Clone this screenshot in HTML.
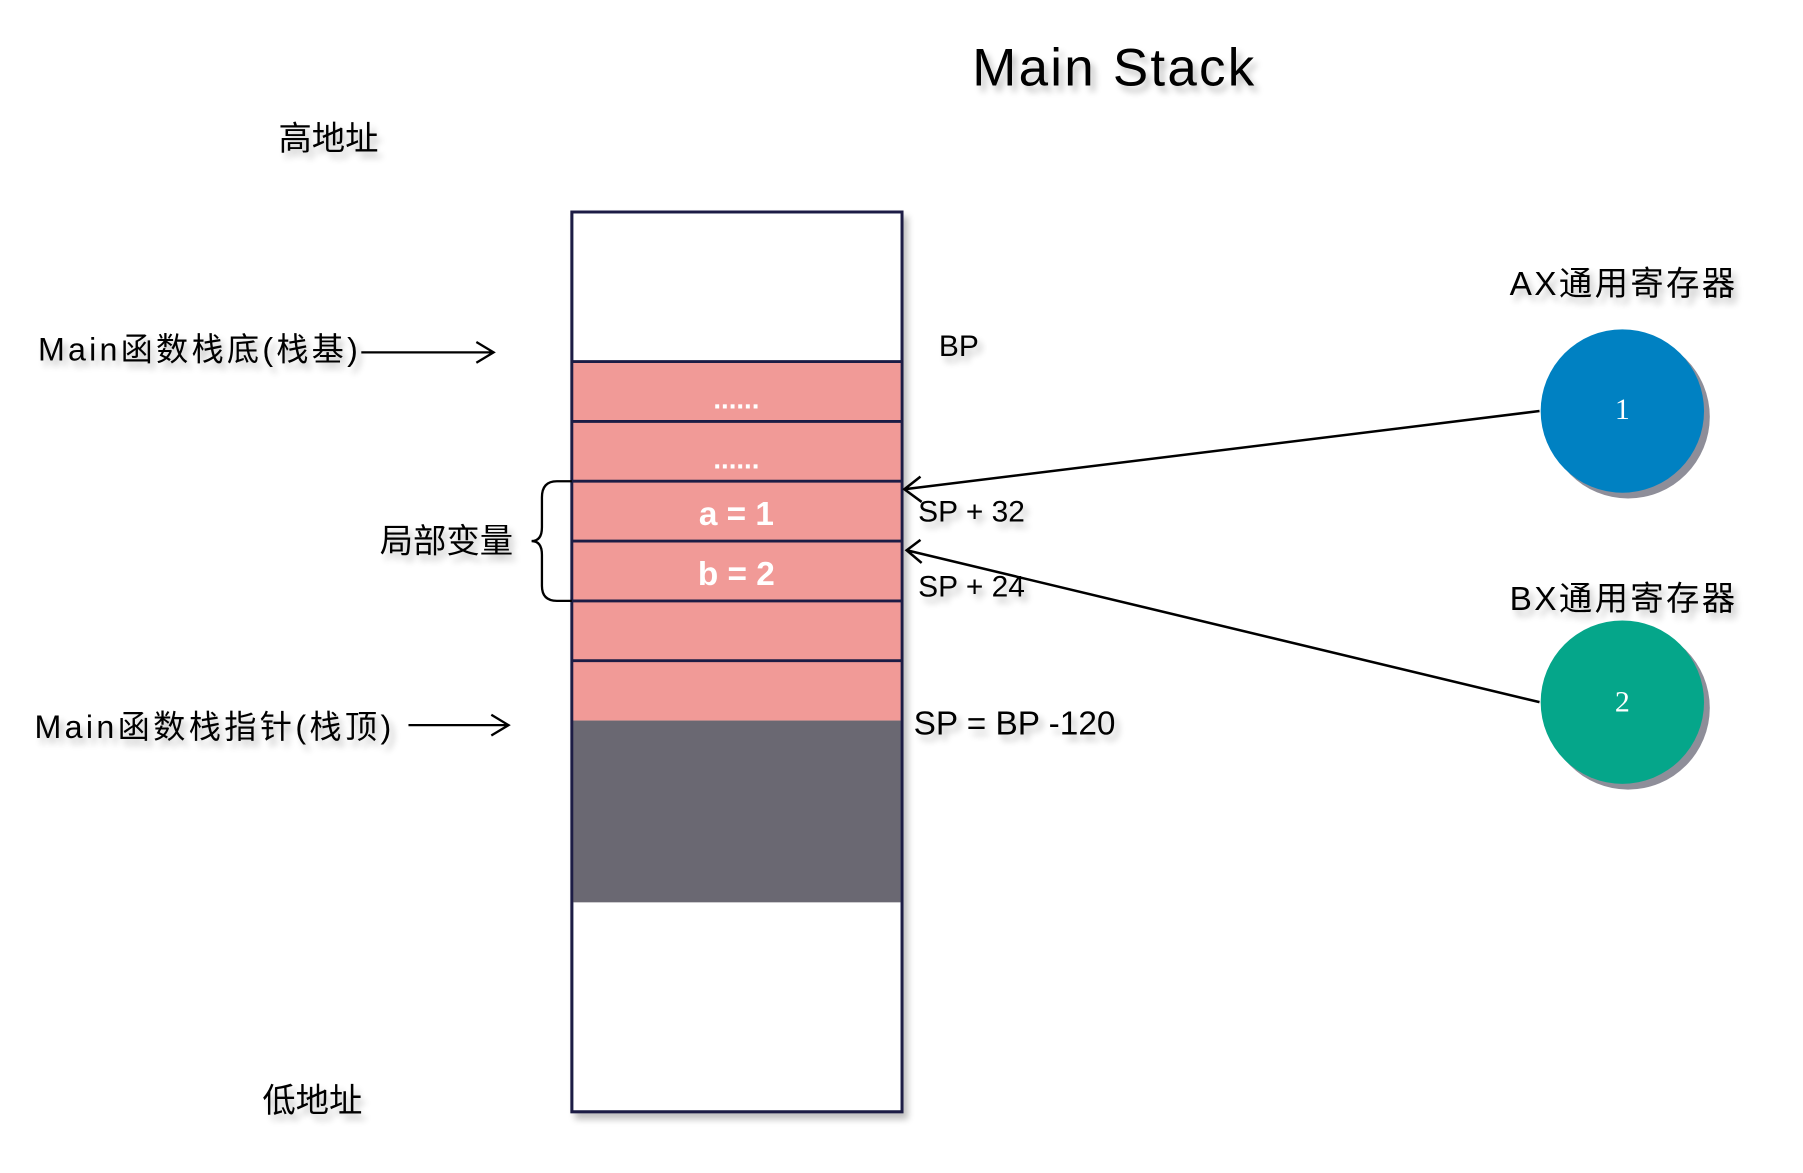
<!DOCTYPE html>
<html><head><meta charset="utf-8"><style>
html,body{margin:0;padding:0;background:#fff;}
svg{display:block;}
text{font-family:"Liberation Sans","Noto Sans CJK SC",sans-serif;fill:#000;}
</style></head><body>
<svg width="1803" height="1173" viewBox="0 0 1567 1019" xmlns="http://www.w3.org/2000/svg">
<defs>
<filter id="sh" x="-20%" y="-20%" width="140%" height="160%">
<feGaussianBlur in="SourceAlpha" stdDeviation="3"/>
<feOffset dx="4" dy="5"/>
<feComponentTransfer><feFuncA type="linear" slope="0.25"/></feComponentTransfer>
<feMerge><feMergeNode/><feMergeNode in="SourceGraphic"/></feMerge>
</filter>
</defs>
<text x="845" y="74" font-size="46" filter="url(#sh)" textLength="245">Main Stack</text>
<text x="242" y="130" font-size="29" filter="url(#sh)">高地址</text>
<text x="228" y="966" font-size="29" filter="url(#sh)">低地址</text>

<g filter="url(#sh)">
<rect x="497" y="184" width="287" height="782" fill="#fff" stroke="#1a1f45" stroke-width="2.5"/>
<rect x="497" y="314" width="287" height="312" fill="#f19a97"/>
<rect x="497" y="626" width="287" height="158" fill="#6b6872"/>
<path d="M497 184V966H784V184ZM497 314H784M497 366H784M497 418H784M497 470H784M497 522H784M497 574H784" fill="none" stroke="#1a1f45" stroke-width="2.5"/>
</g>
<text x="640" y="355" font-size="24" font-weight="bold" style="fill:#fff" text-anchor="middle">......</text>
<text x="640" y="407" font-size="24" font-weight="bold" style="fill:#fff" text-anchor="middle">......</text>
<text x="640" y="456" font-size="29" font-weight="bold" style="fill:#fff" text-anchor="middle">a = 1</text>
<text x="640" y="508" font-size="29" font-weight="bold" style="fill:#fff" text-anchor="middle">b = 2</text>

<text x="816" y="309" font-size="26" filter="url(#sh)">BP</text>
<text x="33" y="313" font-size="28" filter="url(#sh)" textLength="278">Main函数栈底(栈基)</text>
<path d="M314 306H428M414 297L429 306L414 315" fill="none" stroke="#000" stroke-width="2"/>
<text x="30" y="641" font-size="28" filter="url(#sh)" textLength="310">Main函数栈指针(栈顶)</text>
<path d="M355 630H441M427 621L442 630L427 639" fill="none" stroke="#000" stroke-width="2"/>
<text x="330" y="480" font-size="29" filter="url(#sh)">局部变量</text>
<path d="M497 418H484Q471 418 471 432V458Q471 470 462 470Q471 470 471 482V509Q471 522 484 522H497" fill="none" stroke="#000" stroke-width="2"/>

<text x="798" y="453" font-size="26" filter="url(#sh)">SP + 32</text>
<text x="798" y="518" font-size="26" filter="url(#sh)">SP + 24</text>
<text x="794" y="638" font-size="29" filter="url(#sh)">SP = BP -120</text>

<path d="M1338 357L786 425M800 414L786 425L801 436" fill="none" stroke="#000" stroke-width="2.2"/>
<path d="M1338 610L788 478M800 469L788 478L801 489" fill="none" stroke="#000" stroke-width="2.2"/>

<text x="1312" y="256" font-size="29" filter="url(#sh)" textLength="196">AX通用寄存器</text>
<text x="1312" y="530" font-size="29" filter="url(#sh)" textLength="196">BX通用寄存器</text>
<ellipse cx="1415" cy="362" rx="71" ry="71" fill="#8e8e99"/>
<ellipse cx="1410" cy="357" rx="71" ry="71" fill="#0081c2"/>
<ellipse cx="1415" cy="615" rx="71" ry="71" fill="#8e8e99"/>
<ellipse cx="1410" cy="610" rx="71" ry="71" fill="#05a68a"/>
<text x="1410" y="364" font-size="26" text-anchor="middle" style="fill:#fff;font-family:'Liberation Serif',serif">1</text>
<text x="1410" y="618" font-size="26" text-anchor="middle" style="fill:#fff;font-family:'Liberation Serif',serif">2</text>
</svg>
</body></html>
